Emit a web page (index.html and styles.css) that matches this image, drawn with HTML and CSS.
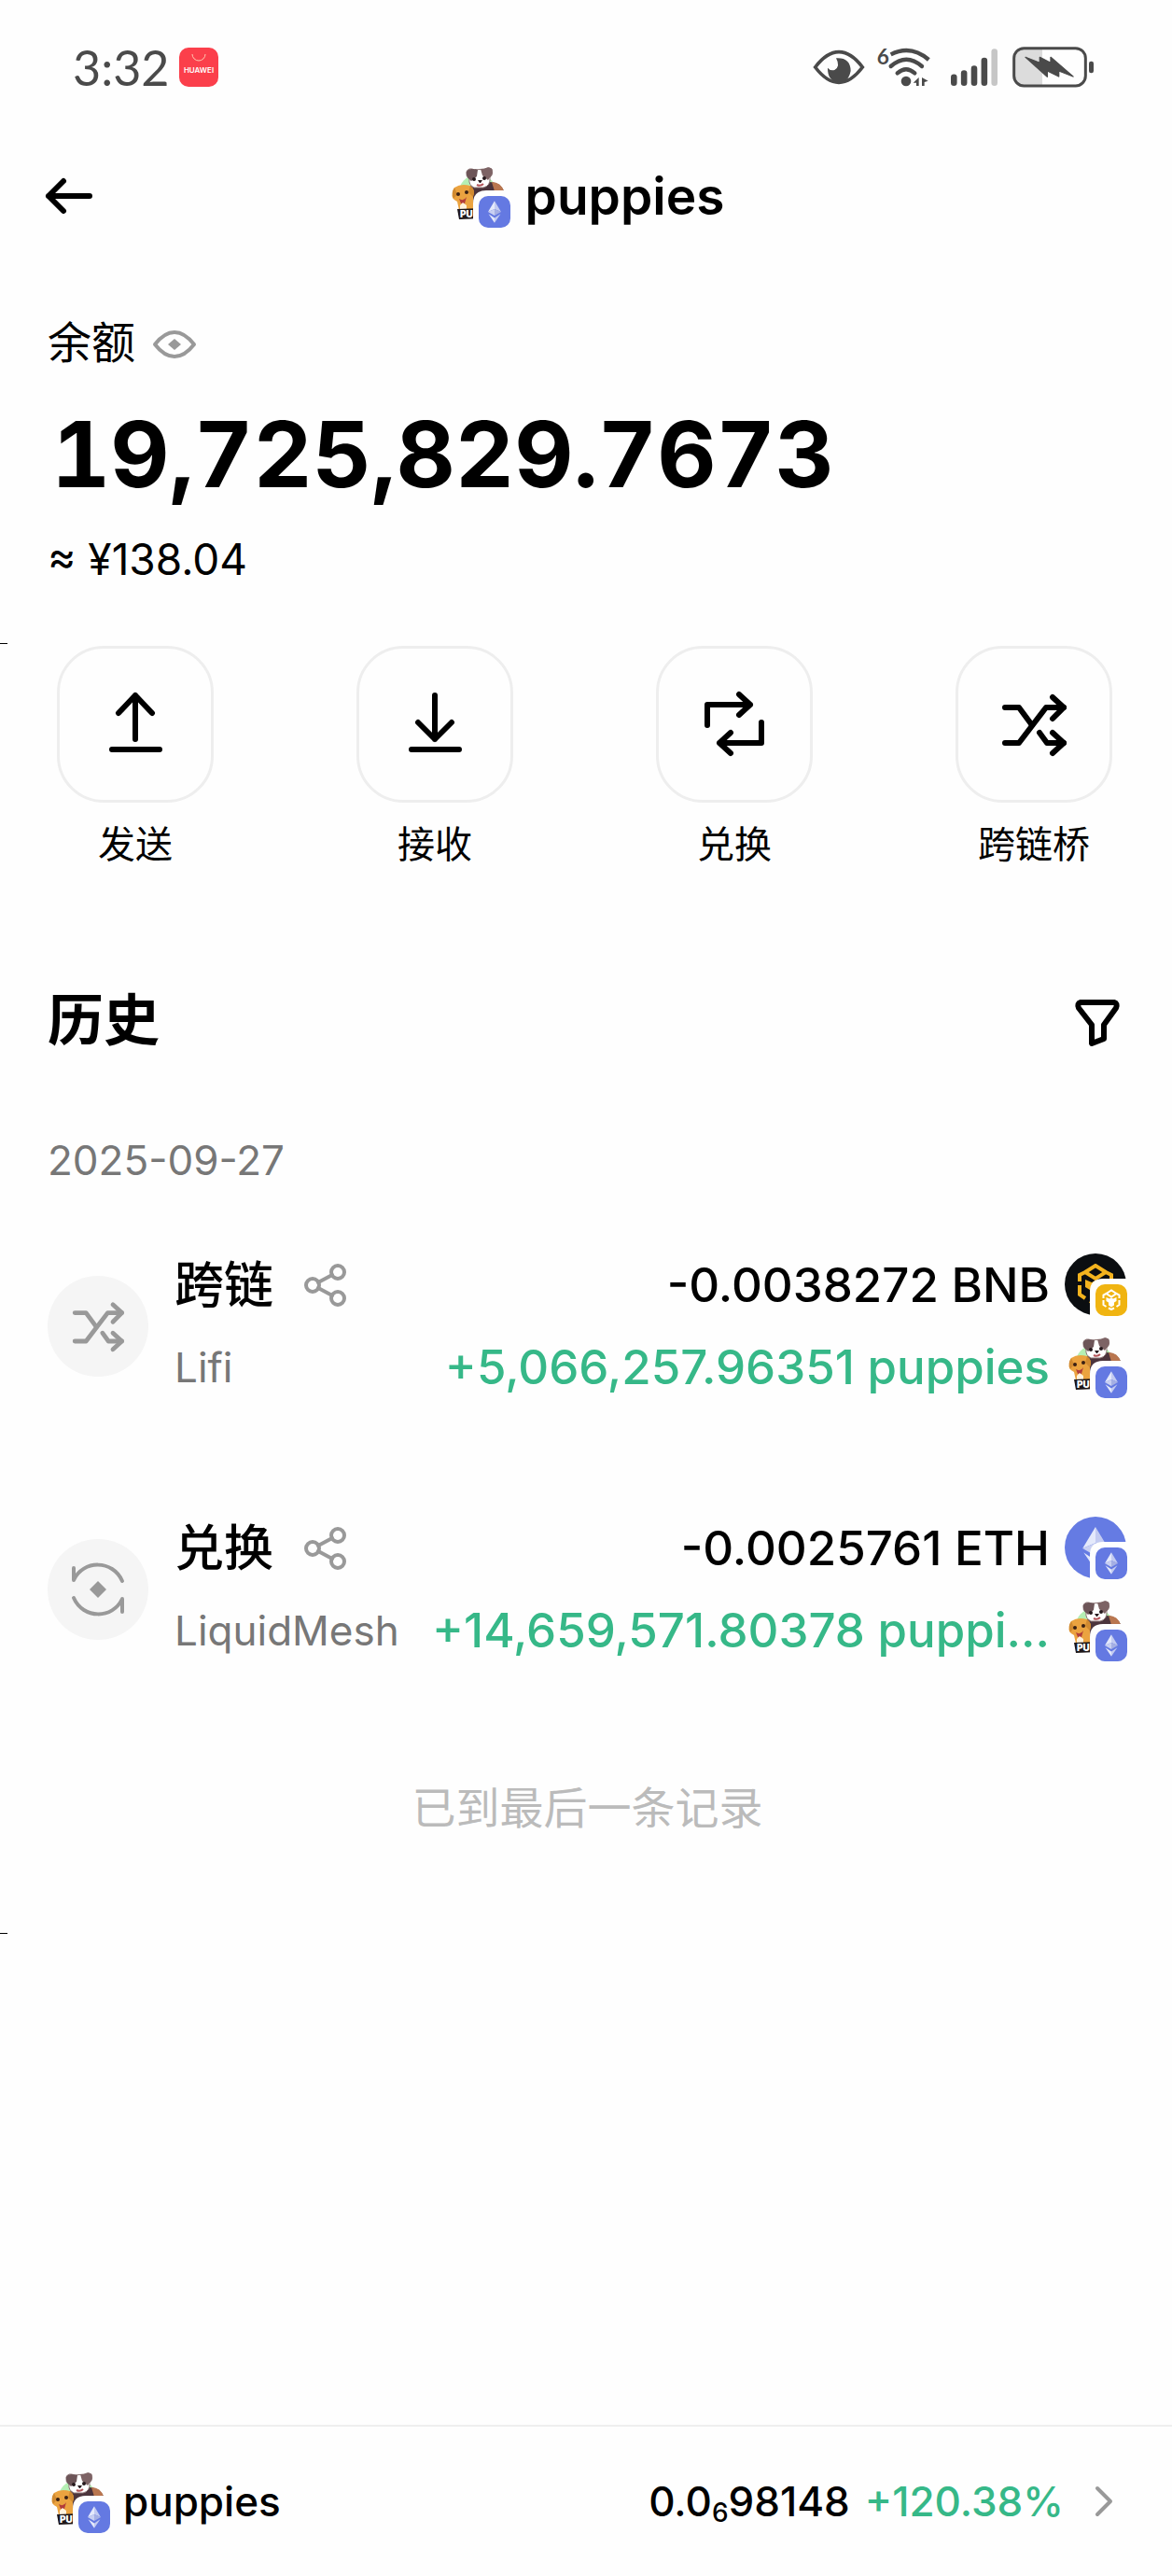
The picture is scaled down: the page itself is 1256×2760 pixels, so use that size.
FILE: index.html
```html
<!DOCTYPE html>
<html lang="zh-CN">
<head>
    <meta charset="UTF-8">
    <meta name="viewport" content="width=device-width, initial-scale=1.0, viewport-fit=cover">
    <title>puppies</title>
    <link rel="stylesheet" href="styles.css">
</head>
<body>
    <!-- 图标定义 -->
    <svg class="defs" aria-hidden="true">
        <symbol id="eth-mark" viewBox="0 0 24 40">
            <path d="M12 0L0 20L12 15Z" fill="#e4e9fb"/>
            <path d="M12 0L24 20L12 15Z" fill="#c3cbf1"/>
            <path d="M0 20L12 15V27Z" fill="#c9d0f2"/>
            <path d="M24 20L12 15V27Z" fill="#a5afe4"/>
            <path d="M1 24L12 31V40Z" fill="#e4e9fb"/>
            <path d="M23 24L12 31V40Z" fill="#c3cbf1"/>
        </symbol>
        <symbol id="bnb-mark" viewBox="0 0 40 44">
            <g fill="none" stroke="currentColor" stroke-width="4" stroke-linejoin="miter">
                <path d="M9 9L20 2L31 9"/>
                <path d="M3 19V12L9 9L20 16L31 9L37 12V19"/>
                <path d="M3 23V33L9 37M37 23V33L31 37"/>
                <path d="M14 40L20 43L26 40"/>
            </g>
            <path d="M9 17L16 20L20 18L24 20L31 17V25L26 28V34L20 38L14 34V28L9 25Z" fill="currentColor"/>
        </symbol>
        <symbol id="eth-badge" viewBox="0 0 40 40">
            <path d="M0 40V14Q0 0 14 0H40V40Z" fill="#fefefe"/>
            <rect x="6" y="6" width="34" height="34" rx="10" fill="#6479e2"/>
            <use href="#eth-mark" x="16" y="11" width="14" height="24"/>
        </symbol>
        <symbol id="token-puppies" viewBox="0 0 67 67">
            <circle cx="32" cy="31" r="21" fill="#b5efb4"/>
            <path d="M24 22L44 18Q57 18 61 30V42H22Z" fill="#4b343c"/>
            <path d="M47 18Q57 18 60 28L50 28Z" fill="#b9764f"/>
            <path d="M20 7Q22 2 29 5L39 4Q44 1 47 4Q49 10 45 13Q46 22 38 24H28Q22 21 23 15Q19 12 20 7Z" fill="#fff" stroke="#8d7575" stroke-width="1"/>
            <path d="M20 7Q22 2 32 5L31 12L25 17L23 15Q19 12 20 7Z" fill="#6d5558"/>
            <path d="M35 4L39 4Q44 1 47 4Q49 10 45 13L43 16L37 11Z" fill="#7d6365"/>
            <circle cx="28" cy="15" r="2" fill="#26191d"/>
            <circle cx="39" cy="14" r="2" fill="#26191d"/>
            <path d="M32 16H37L35 19H34Z" fill="#26191d"/>
            <path d="M31 21Q35 23 38 20" fill="none" stroke="#b4545a" stroke-width="2"/>
            <path d="M7 24Q14 19 24 22Q30 27 27 33L27 48H12L10 39Q3 36 5 30Z" fill="#eba340"/>
            <path d="M7 24Q3 29 6 36L10 31ZM24 22Q30 27 27 34L22 29Z" fill="#d18a30"/>
            <circle cx="11" cy="31" r="2" fill="#3a2013"/>
            <circle cx="20" cy="29" r="2" fill="#3a2013"/>
            <path d="M12 36Q17 39 20 34L18 41H14Z" fill="#b23d3a"/>
            <path d="M13 43L16 40L20 43V48H13Z" fill="#fff2dd"/>
            <path d="M10 47L35 46V57L12 58Z" fill="#1d1719"/>
            <text x="13" y="56" class="tag">PU</text>
            <use href="#eth-badge" x="27" y="27" width="40" height="40"/>
        </symbol>
        <symbol id="token-eth" viewBox="0 0 67 67">
            <circle cx="33" cy="33" r="33" fill="#657be3"/>
            <use href="#eth-mark" x="18" y="11" width="30" height="46"/>
            <use href="#eth-badge" x="27" y="27" width="40" height="40"/>
        </symbol>
        <symbol id="token-bnb" viewBox="0 0 67 67">
            <circle cx="33" cy="33" r="33" fill="#0b0e11"/>
            <use href="#bnb-mark" x="13" y="11" width="40" height="44" color="#f3b31e"/>
            <path d="M27 67V41Q27 27 41 27H67V67Z" fill="#fefefe"/>
            <rect x="33" y="33" width="34" height="34" rx="10" fill="#f0b411"/>
            <use href="#bnb-mark" x="40" y="38" width="20" height="23" color="#fff"/>
        </symbol>
        <symbol id="bridge" viewBox="0 0 80 80">
            <g class="stroke">
                <path d="M9 22H24L38 41"/>
                <path d="M9 60H24L53 22H72"/>
                <path d="M60 11L72 22L60 34"/>
                <path d="M46 49L54 60H72"/>
                <path d="M60 49L72 60L60 71"/>
            </g>
        </symbol>
        <symbol id="share" viewBox="0 0 46 46">
            <g class="thin">
                <circle cx="10" cy="23" r="7"/>
                <circle cx="37" cy="9" r="7"/>
                <circle cx="37" cy="37" r="7"/>
                <path d="M16 20L31 12M16 26L31 34"/>
            </g>
        </symbol>
    </svg>

    <!-- 状态栏 -->
    <div class="status-bar">
        <span class="time">3:32</span>
        <svg class="app-badge" viewBox="0 0 42 42">
            <rect width="42" height="42" rx="10" fill="#fb3f4b"/>
            <path d="M14 7a7 7 0 0 0 14 0" fill="none" stroke="#ffc9b0" stroke-width="1"/>
            <text x="21" y="27" text-anchor="middle" class="brand">HUAWEI</text>
        </svg>
        <div class="status-icons">
            <svg width="54" height="48" viewBox="96 84 162 144">
                <path d="M101 156Q138 107 177 107T253 156Q216 205 177 205T101 156Z" fill="none" stroke="#4a4a4a" stroke-width="11"/>
                <path d="M168 127Q214 124 215 168Q208 205 177 205Q140 200 141 158Q150 169 163 165Q183 154 168 127Z" fill="#4a4a4a"/>
            </svg>
            <svg width="57" height="48" viewBox="298 84 171 144">
                <text x="297" y="147" class="wifi-gen">6</text>
                <g fill="none" stroke="#4a4a4a" stroke-width="13">
                    <path d="M342 115Q406 82 464 132"/>
                    <path d="M342 153Q392 109 442 153" stroke-linecap="round"/>
                    <path d="M363 175Q391 150 419 175" stroke-linecap="round"/>
                </g>
                <circle cx="391" cy="201" r="16" fill="#4a4a4a"/>
                <path d="M432 189V216H424V206H414ZM442 189L462 200L450 204V216H442Z" fill="#4a4a4a"/>
            </svg>
            <svg class="signal" width="50" height="48" viewBox="535 84 152 144">
                <g fill="#4a4a4a">
                    <rect x="535" y="179" width="20" height="38" rx="10"/>
                    <rect x="568" y="166" width="20" height="51" rx="10"/>
                    <rect x="601" y="151" width="20" height="66" rx="10"/>
                    <rect x="634" y="125" width="20" height="92" rx="10"/>
                </g>
                <rect x="667" y="96" width="20" height="121" rx="10" fill="#c6c6c6"/>
            </svg>
            <svg width="87" height="48" viewBox="735 84 261 144">
                <path d="M831 94H772Q740 94 740 126V185Q740 217 772 217H831Z" fill="#dcdcdc"/>
                <rect x="740" y="95" width="230" height="121" rx="32" fill="none" stroke="#4a4a4a" stroke-width="9"/>
                <rect x="981" y="137" width="15" height="38" rx="7" fill="#4a4a4a"/>
                <path d="M777 124L823 142V124L858 142V124L930 186L884 168V186L847 168V187Z" fill="#4a4a4a" stroke="#4a4a4a" stroke-width="4" stroke-linejoin="round"/>
            </svg>
        </div>
    </div>

    <!-- 顶部导航 -->
    <header class="nav">
        <button class="icon-btn back" aria-label="返回">
            <svg width="52" height="40" viewBox="0 0 52 40"><path class="stroke" d="M48 20H4M20 4L4 20L20 36"/></svg>
        </button>
        <h1 class="title">
            <svg class="token"><use href="#token-puppies"/></svg>
            <span>puppies</span>
        </h1>
    </header>

    <main>
        <!-- 余额 -->
        <section class="balance">
            <div class="balance-label">
                <span>余额</span>
                <button class="icon-btn muted" aria-label="隐藏余额">
                    <svg width="48" height="32" viewBox="0 0 48 32">
                        <path class="thin" d="M3 16C10 7 16 3 24 3S38 7 45 16C38 25 32 29 24 29S10 25 3 16Z"/>
                        <path d="M24 10L31 16L24 22L17 16Z" fill="currentColor"/>
                    </svg>
                </button>
            </div>
            <div class="amount">19,725,829.7673</div>
            <div class="fiat">≈ ¥138.04</div>
        </section>

        <div class="tick"></div>

        <!-- 操作按钮 -->
        <nav class="actions">
            <button class="action">
                <span class="tile">
                    <svg viewBox="0 0 80 80"><path class="stroke" d="M40 56V9M22 28L40 9L58 28M15 67H66"/></svg>
                </span>
                发送
            </button>
            <button class="action">
                <span class="tile">
                    <svg viewBox="0 0 80 80"><path class="stroke" d="M40 9V56M22 38L40 56L58 38M15 67H66"/></svg>
                </span>
                接收
            </button>
            <button class="action">
                <span class="tile">
                    <svg viewBox="0 0 80 80"><path class="stroke" d="M11 41V19H57M45 8L57 19L45 30M69 38V60H24M36 49L24 60L36 71"/></svg>
                </span>
                兑换
            </button>
            <button class="action">
                <span class="tile">
                    <svg><use href="#bridge"/></svg>
                </span>
                跨链桥
            </button>
        </nav>

        <!-- 历史记录 -->
        <section class="history">
            <div class="history-head">
                <h2>历史</h2>
                <button class="icon-btn" aria-label="筛选">
                    <svg width="48" height="52" viewBox="0 0 48 52"><path class="stroke" d="M6 4H42Q46 5 44 10L31 28V43L18 48V28L4 10Q2 5 6 4Z"/></svg>
                </button>
            </div>
            <div class="date">2025-09-27</div>

            <ul class="records">
                <li class="record">
                    <span class="kind"><svg><use href="#bridge"/></svg></span>
                    <div class="lines">
                        <div class="line">
                            <span class="name">跨链</span>
                            <button class="icon-btn muted" aria-label="分享"><svg class="share"><use href="#share"/></svg></button>
                            <span class="value">-0.0038272 BNB</span>
                            <svg class="token"><use href="#token-bnb"/></svg>
                        </div>
                        <div class="line">
                            <span class="source">Lifi</span>
                            <span class="value up">+5,066,257.96351 puppies</span>
                            <svg class="token"><use href="#token-puppies"/></svg>
                        </div>
                    </div>
                </li>
                <li class="record">
                    <span class="kind">
                        <svg viewBox="0 0 64 64">
                            <path class="thin" d="M6 9V22C16 0 48 0 58 23M58 56V42C48 64 16 64 6 41"/>
                            <path d="M32 23L41 32L32 41L23 32Z" fill="currentColor"/>
                        </svg>
                    </span>
                    <div class="lines">
                        <div class="line">
                            <span class="name">兑换</span>
                            <button class="icon-btn muted" aria-label="分享"><svg class="share"><use href="#share"/></svg></button>
                            <span class="value">-0.0025761 ETH</span>
                            <svg class="token"><use href="#token-eth"/></svg>
                        </div>
                        <div class="line">
                            <span class="source">LiquidMesh</span>
                            <span class="value up">+14,659,571.80378 puppi...</span>
                            <svg class="token"><use href="#token-puppies"/></svg>
                        </div>
                    </div>
                </li>
            </ul>
            <p class="end">已到最后一条记录</p>
        </section>

        <div class="tick"></div>
    </main>

    <!-- 底部行情 -->
    <a class="quote" href="#">
        <svg class="token"><use href="#token-puppies"/></svg>
        <span>puppies</span>
        <span class="price">0.0<small>6</small>98148</span>
        <span class="up">+120.38%</span>
        <svg class="chevron" width="22" height="36" viewBox="0 0 22 36"><path class="thin" d="M4 4L18 18L4 32"/></svg>
    </a>
</body>
</html>
```
FILE: styles.css
```css
* { margin: 0; padding: 0; box-sizing: border-box; }
body {
    display: flex;
    flex-direction: column;
    min-height: 100vh;
    background: #fefefe;
    color: #000;
    font-family: Inter, "Noto Sans CJK SC", sans-serif;
    font-size: 44px;
    line-height: 60px;
}
button {
    background: none;
    border: none;
    color: inherit;
    font: inherit;
    cursor: pointer;
}
svg { display: block; flex: none; overflow: visible; }
.defs { position: absolute; width: 0; height: 0; }
.stroke, .thin {
    fill: none;
    stroke: currentColor;
    stroke-width: 6;
    stroke-linecap: round;
    stroke-linejoin: round;
}
.thin { stroke-width: 4; }
.tag { font: 900 10px Inter, sans-serif; fill: #fff; }
.brand { font: 600 8px Inter, sans-serif; fill: #fff; }
.wifi-gen { font: 700 68px Lato, sans-serif; fill: #4a4a4a; }
.token { width: 67px; height: 67px; }
.icon-btn { display: flex; }
.muted { color: #999; }
.up { color: #36b888; }
.tick { width: 8px; height: 1px; background: #000; }

/* 状态栏 */
.status-bar {
    display: flex;
    align-items: center;
    height: 144px;
    padding: 0 84px 0 78px;
}
.time {
    font-family: Lato, sans-serif;
    font-size: 52px;
    color: #4a4a4a;
}
.app-badge { width: 42px; height: 42px; margin-left: 11px; }
.status-icons { display: flex; gap: 14px; margin-left: auto; }
.signal { margin: 0 2px 0 8px; }

/* 顶部导航 */
.nav {
    display: grid;
    grid-template-columns: 1fr auto 1fr;
    align-items: center;
    height: 132px;
    padding: 0 48px;
}
.title {
    display: flex;
    align-items: center;
    gap: 16px;
    font-size: 55px;
    font-weight: 600;
}

/* 余额 */
.balance { padding: 61px 51px 60px; }
.balance-label {
    display: flex;
    align-items: center;
    gap: 18px;
    font-size: 47px;
}
.balance-label .icon-btn { padding-top: 4px; }
.amount {
    margin: 30px 0 22px;
    padding-left: 4px;
    font-size: 98px;
    font-weight: 700;
    font-variant-numeric: tabular-nums;
    line-height: 120px;
}
.fiat { font-size: 46px; }

/* 操作按钮 */
.actions {
    display: flex;
    justify-content: space-between;
    padding: 2px 64px 0 61px;
}
.action { width: 168px; font-size: 40px; }
.tile {
    display: flex;
    align-items: center;
    justify-content: center;
    height: 168px;
    margin-bottom: 15px;
    border: 3px solid #eee;
    border-radius: 50px;
}
.tile svg { width: 80px; height: 80px; }

/* 历史记录 */
.history { padding: 118px 48px 104px 51px; }
.history-head {
    display: flex;
    align-items: center;
    justify-content: space-between;
    padding-right: 8px;
}
.history-head .icon-btn { padding-top: 6px; }
h2 { font-size: 60px; font-weight: 700; line-height: 80px; }
.date { margin: 80px 0 70px; color: #777; }
.records { list-style: none; }
.record {
    display: flex;
    align-items: center;
    gap: 28px;
    margin-bottom: 127px;
}
.kind {
    display: flex;
    align-items: center;
    justify-content: center;
    flex: none;
    width: 108px;
    height: 108px;
    border-radius: 50%;
    background: #f5f5f5;
    color: #999;
}
.kind svg { width: 64px; height: 64px; }
.lines { flex: 1; display: grid; gap: 21px; }
.line { display: flex; align-items: center; height: 67px; white-space: nowrap; }
.name { margin-right: 32px; font-size: 53px; font-weight: 500; }
.share { width: 46px; height: 46px; }
.source { color: #777; }
.value {
    margin: 0 16px 0 auto;
    font-size: 51px;
    font-weight: 500;
}
.end { color: #bbb; font-size: 47px; text-align: center; }

/* 底部行情 */
.quote {
    display: flex;
    align-items: center;
    height: 162px;
    margin-top: auto;
    padding: 0 62px 0 51px;
    border-top: 2px solid #eee;
    color: inherit;
    font-weight: 500;
    text-decoration: none;
}
.quote .token { margin-right: 14px; }
.price { margin: 0 16px 0 auto; }
.price small { font-size: 28px; vertical-align: -6px; line-height: 1; }
.chevron { margin-left: 32px; color: #999; }
```
